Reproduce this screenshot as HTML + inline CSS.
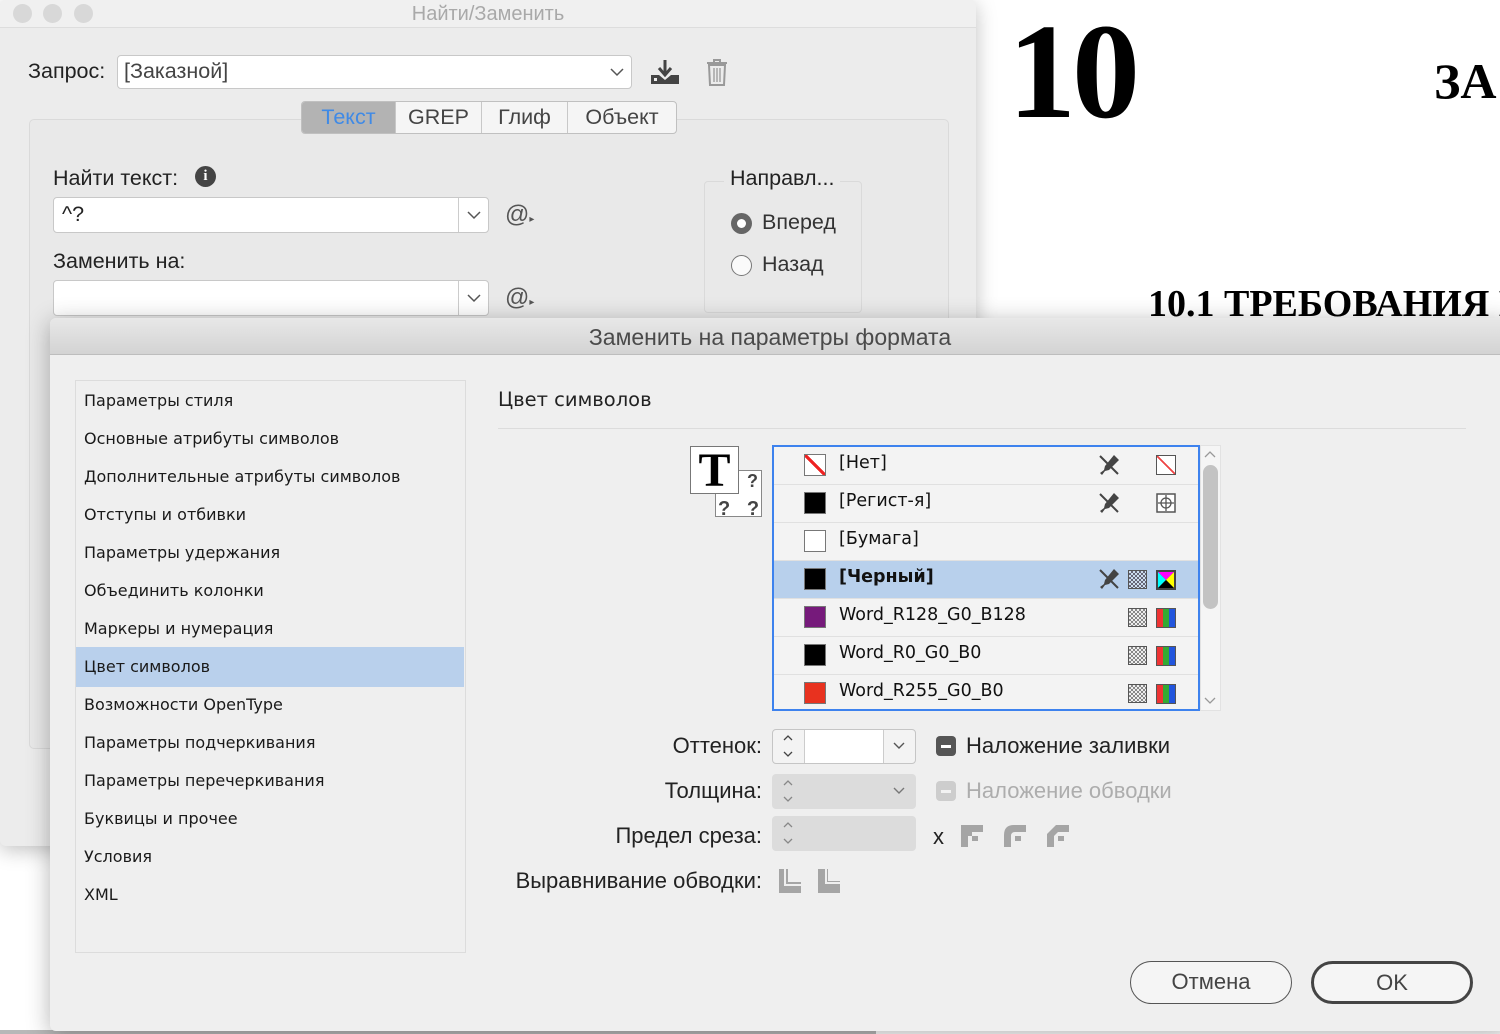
<!DOCTYPE html>
<html><head><meta charset="utf-8"><style>
*{box-sizing:border-box;margin:0;padding:0}
body{width:1500px;height:1034px;overflow:hidden;background:#fff;position:relative;font-family:"Liberation Sans","DejaVu Sans",sans-serif;color:#222}
.a{position:absolute}
.lbl{font-size:21.5px;color:#222;white-space:nowrap}
.fl{font-size:22px}
.serif{font-family:"Liberation Serif",serif;font-weight:bold;color:#000}
.li{position:absolute;left:8px;font-family:"DejaVu Sans",sans-serif;font-size:16px;color:#1a1a1a;white-space:nowrap}
.row{position:absolute;left:0;width:425px;height:38px;border-bottom:1px solid #e0e0e0}
.sw{position:absolute;left:30px;top:7px;width:22px;height:22px;border:1px solid #777}
.rt{position:absolute;left:65px;top:6px;font-family:"DejaVu Sans",sans-serif;font-size:17.5px;color:#111;white-space:nowrap}
.grid{position:absolute;left:354px;top:9px;width:19px;height:19px;border:1.5px solid #555;background:repeating-conic-gradient(#888 0 25%,#eee 0 50%) 0 0/4px 4px}
.rgb{position:absolute;left:382px;top:9px;width:20px;height:20px;border:1.5px solid #555;background:linear-gradient(90deg,#e33 0 33%,#3a3 33% 66%,#25d 66%)}
</style></head><body>

<!-- document -->
<div class="a serif" style="left:1008px;top:-6px;font-size:136px;letter-spacing:-4px">10</div>
<div class="a serif" style="left:1434px;top:52px;font-size:50px">ЗА</div>
<div class="a serif" style="left:1148px;top:282px;font-size:38px;white-space:nowrap">10.1 ТРЕБОВАНИЯ П</div>
<div class="a" style="left:0;top:1030px;width:876px;height:4px;background:#b8b8b8"></div>

<!-- back dialog -->
<div class="a" style="left:0;top:0;width:976px;height:846px;background:#ececec;border-radius:6px;box-shadow:0 4px 20px rgba(0,0,0,.25)">
 <div class="a" style="left:0;top:0;width:976px;height:28px;background:#f0f0f0;border-bottom:1px solid #ddd;border-radius:6px 6px 0 0"></div>
 <div class="a" style="left:13px;top:4px;width:19px;height:19px;border-radius:50%;background:#d8d8d8"></div>
 <div class="a" style="left:43px;top:4px;width:19px;height:19px;border-radius:50%;background:#d8d8d8"></div>
 <div class="a" style="left:74px;top:4px;width:19px;height:19px;border-radius:50%;background:#d8d8d8"></div>
 <div class="a" style="left:0;width:976px;top:3px;text-align:center;font-size:20px;color:#a9a9a9">Найти/Заменить</div>

 <div class="a lbl" style="left:28px;top:59px">Запрос:</div>
 <div class="a" style="left:117px;top:55px;width:515px;height:34px;background:#fff;border:1px solid #c8c8c8;border-radius:4px"></div>
 <div class="a lbl" style="left:124px;top:59px;color:#444">[Заказной]</div>
 <svg class="a" style="left:609px;top:66px" width="16" height="12"><path d="M2 3l6 6 6-6" fill="none" stroke="#555" stroke-width="1.5"/></svg>
 <svg class="a" style="left:650px;top:58px" width="30" height="27"><path d="M15 2v14M9 10l6 7 6-7" fill="none" stroke="#444" stroke-width="3"/><path d="M1 17h8l6 5 6-5h8v9H1z" fill="#444"/><rect x="4" y="20" width="3" height="3" fill="#eee"/></svg>
 <svg class="a" style="left:705px;top:58px" width="24" height="29"><path d="M2 5h20M9 5V2h6v3" fill="none" stroke="#999" stroke-width="2"/><path d="M4 7h16l-1 20H5z" fill="none" stroke="#999" stroke-width="2"/><path d="M9 10v14M12 10v14M15 10v14" stroke="#999" stroke-width="1.3"/></svg>

 <div class="a" style="left:29px;top:119px;width:920px;height:630px;border:1px solid #dadada;border-radius:5px;background:#e9e9e9"></div>
 <div class="a" style="left:301px;top:101px;width:376px;height:33px;border:1px solid #c0c0c0;border-radius:4px;background:#f5f5f5;overflow:hidden;display:flex;font-size:21.5px;color:#444">
  <div style="width:93px;background:#b3b3b3;color:#3f8ae6;text-align:center;line-height:31px">Текст</div>
  <div style="width:86px;border-left:1px solid #c8c8c8;text-align:center;line-height:31px">GREP</div>
  <div style="width:86px;border-left:1px solid #c8c8c8;text-align:center;line-height:31px">Глиф</div>
  <div style="flex:1;border-left:1px solid #c8c8c8;text-align:center;line-height:31px">Объект</div>
 </div>

 <div class="a lbl" style="left:53px;top:166px">Найти текст:</div>
 <div class="a" style="left:195px;top:166px;width:21px;height:21px;border-radius:50%;background:#444;color:#fff;font:bold 15px 'Liberation Serif',serif;text-align:center;line-height:21px">i</div>
 <div class="a" style="left:53px;top:197px;width:436px;height:36px;background:#fff;border:1px solid #c8c8c8;border-radius:4px"></div>
 <div class="a" style="left:458px;top:198px;width:1px;height:34px;background:#ccc"></div>
 <div class="a lbl" style="left:62px;top:202px">^?</div>
 <svg class="a" style="left:466px;top:209px" width="16" height="12"><path d="M2 3l6 6 6-6" fill="none" stroke="#555" stroke-width="1.5"/></svg>
 <div class="a lbl" style="left:505px;top:201px;font-size:24px;color:#555">@<span style="font-size:10px">▸</span></div>

 <div class="a lbl" style="left:53px;top:249px">Заменить на:</div>
 <div class="a" style="left:53px;top:280px;width:436px;height:36px;background:#fff;border:1px solid #c8c8c8;border-radius:4px"></div>
 <div class="a" style="left:458px;top:281px;width:1px;height:34px;background:#ccc"></div>
 <svg class="a" style="left:466px;top:292px" width="16" height="12"><path d="M2 3l6 6 6-6" fill="none" stroke="#555" stroke-width="1.5"/></svg>
 <div class="a lbl" style="left:505px;top:284px;font-size:24px;color:#555">@<span style="font-size:10px">▸</span></div>

 <div class="a" style="left:704px;top:181px;width:158px;height:132px;border:1px solid #dadada;border-radius:4px"></div>
 <div class="a lbl" style="left:724px;top:166px;background:#e9e9e9;padding:0 6px">Направл...</div>
 <div class="a" style="left:731px;top:213px;width:21px;height:21px;border-radius:50%;background:#666"></div>
 <div class="a" style="left:737px;top:219px;width:9px;height:9px;border-radius:50%;background:#fff"></div>
 <div class="a lbl" style="left:762px;top:210px;color:#333">Вперед</div>
 <div class="a" style="left:731px;top:255px;width:21px;height:21px;border-radius:50%;border:1.5px solid #777;background:#fafafa"></div>
 <div class="a lbl" style="left:762px;top:252px;color:#333">Назад</div>
</div>

<!-- front dialog -->
<div class="a" style="left:50px;top:318px;width:1460px;height:713px;background:#efefef;border-radius:6px;box-shadow:0 4px 24px rgba(0,0,0,.3);overflow:hidden">
 <div class="a" style="left:0;top:0;width:1460px;height:37px;background:linear-gradient(#e8e8e8,#d3d3d3);border-bottom:1px solid #bdbdbd"></div>
 <div class="a" style="left:0;width:1440px;text-align:center;top:6px;font-size:23px;color:#4a4a4a;white-space:nowrap">Заменить на параметры формата</div>

 <div class="a" style="left:25px;top:62px;width:391px;height:573px;border:1.5px solid #dcdcdc;background:#efefef">
  <div class="a" style="left:0;top:266px;width:388px;height:40px;background:#b9d0ec"></div>
  <div class="li" style="top:10px">Параметры стиля</div>
  <div class="li" style="top:48px">Основные атрибуты символов</div>
  <div class="li" style="top:86px">Дополнительные атрибуты символов</div>
  <div class="li" style="top:124px">Отступы и отбивки</div>
  <div class="li" style="top:162px">Параметры удержания</div>
  <div class="li" style="top:200px">Объединить колонки</div>
  <div class="li" style="top:238px">Маркеры и нумерация</div>
  <div class="li" style="top:276px">Цвет символов</div>
  <div class="li" style="top:314px">Возможности OpenType</div>
  <div class="li" style="top:352px">Параметры подчеркивания</div>
  <div class="li" style="top:390px">Параметры перечеркивания</div>
  <div class="li" style="top:428px">Буквицы и прочее</div>
  <div class="li" style="top:466px">Условия</div>
  <div class="li" style="top:504px">XML</div>
 </div>

 <div class="a" style="left:448px;top:70px;font-family:'DejaVu Sans',sans-serif;font-size:19.5px;color:#222">Цвет символов</div>
 <div class="a" style="left:448px;top:110px;width:968px;height:1px;background:#dcdcdc"></div>

 <!-- T icon -->
 <div class="a" style="left:665px;top:152px;width:47px;height:47px;background:#fff;border:1px solid #888"></div>
 <div class="a" style="left:668px;top:180px;font:bold 20px 'Liberation Sans';color:#444;white-space:nowrap">?&nbsp;&nbsp;&nbsp;?</div>
 <div class="a" style="left:697px;top:153px;font:bold 18px 'Liberation Sans';color:#444">?</div>
 <div class="a" style="left:640px;top:128px;width:49px;height:48px;background:#fff;border:1px solid #777;text-align:center;font:bold 48px/48px 'Liberation Serif',serif;color:#000">T</div>

 <!-- swatch list -->
 <div class="a" style="left:722px;top:127px;width:428px;height:266px;border:2px solid #3d82ee;background:#f3f3f3;overflow:hidden">
  <div class="row" style="top:0"><div class="sw" style="background:linear-gradient(to top right,#fff 44%,#e22 44% 56%,#fff 56%)"></div><div class="rt">[Нет]</div>
   <svg class="a" style="left:324px;top:7px" width="22" height="22"><path d="M2 2l18 18" stroke="#444" stroke-width="2"/><path d="M16 1l5 5-10 10-4 1-3 4-2-2 4-3 1-4z" fill="#444"/></svg>
   <div class="a" style="left:382px;top:8px;width:20px;height:20px;border:1.5px solid #555;background:linear-gradient(to top right,#fff 46%,#e44 46% 54%,#fff 54%)"></div></div>
  <div class="row" style="top:38px"><div class="sw" style="background:#000"></div><div class="rt">[Регист-я]</div>
   <svg class="a" style="left:324px;top:7px" width="22" height="22"><path d="M2 2l18 18" stroke="#444" stroke-width="2"/><path d="M16 1l5 5-10 10-4 1-3 4-2-2 4-3 1-4z" fill="#444"/></svg>
   <svg class="a" style="left:382px;top:8px" width="20" height="20"><rect x="1" y="1" width="18" height="18" fill="#fff" stroke="#555" stroke-width="1.5"/><circle cx="10" cy="10" r="5" fill="none" stroke="#555" stroke-width="1.3"/><path d="M10 2v16M2 10h16" stroke="#555" stroke-width="1.3"/></svg></div>
  <div class="row" style="top:76px"><div class="sw" style="background:#fff"></div><div class="rt">[Бумага]</div></div>
  <div class="row" style="top:114px;background:#b8d0ec"><div class="sw" style="background:#000"></div><div class="rt" style="font-weight:bold">[Черный]</div>
   <svg class="a" style="left:324px;top:7px" width="22" height="22"><path d="M2 2l18 18" stroke="#444" stroke-width="2"/><path d="M16 1l5 5-10 10-4 1-3 4-2-2 4-3 1-4z" fill="#444"/></svg>
   <div class="grid" style="background:repeating-conic-gradient(#667 0 25%,#cde 0 50%) 0 0/4px 4px"></div>
   <svg class="a" style="left:382px;top:9px" width="20" height="20"><rect width="20" height="20" fill="#444"/><path d="M2 2h16L10 10z" fill="#f0f"/><path d="M2 2v16L10 10z" fill="#0ff"/><path d="M18 2v16L10 10z" fill="#ff0"/><path d="M2 18h16L10 10z" fill="#000"/></svg></div>
  <div class="row" style="top:152px"><div class="sw" style="background:#761a7b"></div><div class="rt">Word_R128_G0_B128</div><div class="grid"></div><div class="rgb"></div></div>
  <div class="row" style="top:190px"><div class="sw" style="background:#000"></div><div class="rt">Word_R0_G0_B0</div><div class="grid"></div><div class="rgb"></div></div>
  <div class="row" style="top:228px;border:none"><div class="sw" style="background:#e8321f"></div><div class="rt">Word_R255_G0_B0</div><div class="grid"></div><div class="rgb"></div></div>
 </div>
 <div class="a" style="left:1150px;top:127px;width:21px;height:266px;background:#f5f5f5;border:1px solid #e2e2e2"></div>
 <div class="a" style="left:1153px;top:147px;width:15px;height:144px;border-radius:8px;background:#c3c3c3"></div>
 <svg class="a" style="left:1153px;top:132px" width="14" height="10"><path d="M2 7l5-5 5 5" fill="none" stroke="#999" stroke-width="1.3"/></svg>
 <svg class="a" style="left:1153px;top:378px" width="14" height="10"><path d="M2 2l5 5 5-5" fill="none" stroke="#999" stroke-width="1.3"/></svg>

 <!-- controls -->
 <div class="a lbl fl" style="left:0;width:712px;text-align:right;top:415px">Оттенок:</div>
 <div class="a" style="left:722px;top:411px;width:144px;height:35px;border:1px solid #c5c5c5;border-radius:4px;background:#f3f3f3"></div>
 <div class="a" style="left:754px;top:412px;width:80px;height:33px;background:#fff;border-left:1px solid #ccc;border-right:1px solid #ccc"></div>
 <svg class="a" style="left:731px;top:413px" width="14" height="30"><path d="M3 9l4-4 4 4M3 21l4 4 4-4" fill="none" stroke="#444" stroke-width="1.3"/></svg>
 <svg class="a" style="left:842px;top:423px" width="14" height="10"><path d="M2 2l5 5 5-5" fill="none" stroke="#555" stroke-width="1.4"/></svg>
 <div class="a" style="left:886px;top:418px;width:20px;height:20px;border-radius:4px;background:#555"></div>
 <div class="a" style="left:891px;top:427px;width:10px;height:3px;background:#fff"></div>
 <div class="a lbl fl" style="left:916px;top:415px">Наложение заливки</div>

 <div class="a lbl fl" style="left:0;width:712px;text-align:right;top:460px">Толщина:</div>
 <div class="a" style="left:722px;top:456px;width:144px;height:35px;border-radius:4px;background:#dcdcdc"></div>
 <svg class="a" style="left:731px;top:458px" width="14" height="30"><path d="M3 9l4-4 4 4M3 21l4 4 4-4" fill="none" stroke="#888" stroke-width="1.3"/></svg>
 <svg class="a" style="left:842px;top:468px" width="14" height="10"><path d="M2 2l5 5 5-5" fill="none" stroke="#777" stroke-width="1.4"/></svg>
 <div class="a" style="left:886px;top:463px;width:20px;height:20px;border-radius:4px;background:#cdcdcd"></div>
 <div class="a" style="left:891px;top:472px;width:10px;height:3px;background:#f2f2f2"></div>
 <div class="a lbl fl" style="left:916px;top:460px;color:#adadad">Наложение обводки</div>

 <div class="a lbl fl" style="left:0;width:712px;text-align:right;top:505px">Предел среза:</div>
 <div class="a" style="left:722px;top:498px;width:144px;height:35px;border-radius:4px;background:#dcdcdc"></div>
 <svg class="a" style="left:731px;top:500px" width="14" height="30"><path d="M3 9l4-4 4 4M3 21l4 4 4-4" fill="none" stroke="#888" stroke-width="1.3"/></svg>
 <div class="a lbl fl" style="left:883px;top:506px">x</div>
 <svg class="a" style="left:911px;top:507px" width="22" height="22"><path d="M0 0h22v7H11v4H7v11H0z" fill="#a5a5a5"/><path d="M11 11h6v5h-6z" fill="#a5a5a5"/></svg>
 <svg class="a" style="left:954px;top:507px" width="22" height="22"><path d="M0 22V10Q0 0 10 0h12v7H11Q7 7 7 11v11z" fill="#a5a5a5"/><path d="M11 11h6v5h-6z" fill="#a5a5a5"/></svg>
 <svg class="a" style="left:997px;top:507px" width="22" height="22"><path d="M0 22V9L9 0h13v7H11L7 11v11z" fill="#a5a5a5"/><path d="M11 11h6v5h-6z" fill="#a5a5a5"/></svg>

 <div class="a lbl fl" style="left:0;width:712px;text-align:right;top:550px">Выравнивание обводки:</div>
 <svg class="a" style="left:729px;top:551px" width="22" height="24"><path d="M0 0h5v17h17v7H0z" fill="#a5a5a5"/><path d="M7 0h2v13h13v2H7z" fill="#a5a5a5"/></svg>
 <svg class="a" style="left:768px;top:551px" width="22" height="24"><path d="M0 0h7v15h15v9H0z" fill="#a5a5a5"/><path d="M9 0h1v12h12v1H9z" fill="#a5a5a5"/></svg>

 <div class="a" style="left:1080px;top:643px;width:162px;height:43px;border:1.5px solid #555;border-radius:22px;background:#f5f5f5;text-align:center;line-height:40px;font-size:22px;color:#444">Отмена</div>
 <div class="a" style="left:1261px;top:643px;width:162px;height:43px;border:3px solid #444;border-radius:22px;background:#f5f5f5;text-align:center;line-height:37px;font-size:22px;color:#444">OK</div>
</div>
</body></html>
